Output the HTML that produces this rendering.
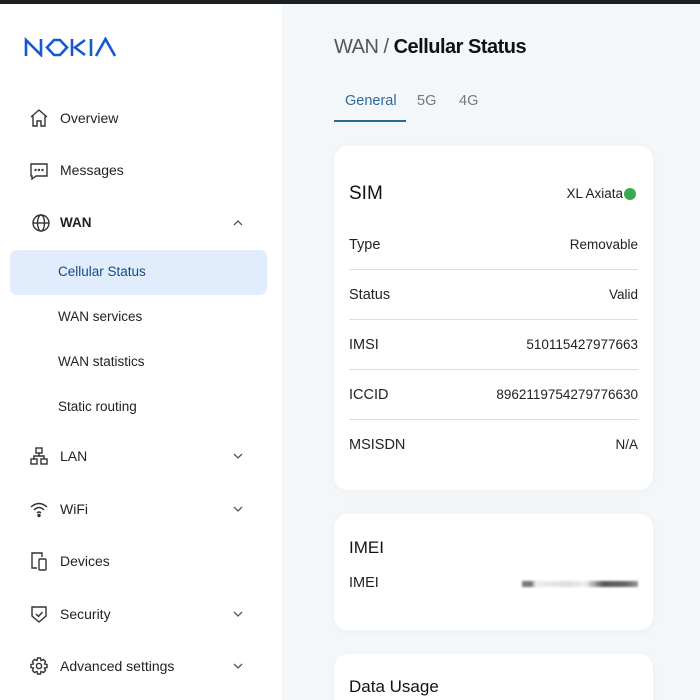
<!DOCTYPE html>
<html><head><style>
*{margin:0;padding:0;box-sizing:border-box}
html,body{width:700px;height:700px;overflow:hidden}
body{background:#f4f7fa;font-family:"Liberation Sans",sans-serif;position:relative;color:#222}
.top{position:absolute;left:0;top:0;width:700px;height:4px;background:#1c1f24}
.side{position:absolute;left:0;top:4px;width:282px;height:696px;background:#fff}
.a{position:absolute}
.nav{position:absolute;left:60px;font-size:14px;color:#222}
.ic{position:absolute;left:29px;width:20px;height:20px}
.chev{position:absolute;left:232px;width:12px;height:8px}
.sub{position:absolute;left:58px;font-size:13.5px;color:#222}
.card{position:absolute;left:334px;width:319px;background:#fff;border-radius:14px;box-shadow:0 2px 10px rgba(0,0,0,0.03)}
.row{position:absolute;left:15px;right:15px;height:50px;border-bottom:1px solid #ddd;font-size:14.5px}
.row span{position:absolute;top:0}
.row .v{right:0;font-size:13.5px}
</style></head><body>
<div class="top"></div>
<div class="side"></div>
<svg class="a" style="left:24px;top:37px" width="93" height="20" viewBox="0 0 93 20" fill="none" stroke="#1657d4" stroke-width="2.6" stroke-linejoin="miter">
<path d="M2 19V3L17 18V2"/>
<path d="M23 10.5L30 3H36L43 10.5L36 18H30Z"/>
<path d="M48 2V19"/><path d="M61 3L51 10.5L61 18"/>
<path d="M67 2V19"/>
<path d="M72 19L81.5 2L91 19"/>
</svg>
<svg class="ic" style="top:108px" viewBox="0 0 20 20" fill="none" stroke="#333" stroke-width="1.4"><path d="M2 9L10 2L18 9"/><path d="M4 8V18H8V13H12V18H16V8"/></svg>
<div class="nav" style="top:110px">Overview</div>
<svg class="ic" style="top:161px" viewBox="0 0 20 20" fill="none" stroke="#333" stroke-width="1.4"><path d="M2 3H18V15H7L3 18V15H2Z"/><circle cx="6.5" cy="9" r=".5"/><circle cx="10" cy="9" r=".5"/><circle cx="13.5" cy="9" r=".5"/></svg>
<div class="nav" style="top:162px">Messages</div>
<svg class="ic" style="top:213px;left:31px" viewBox="0 0 20 20" fill="none" stroke="#333" stroke-width="1.4"><circle cx="10" cy="10" r="8"/><ellipse cx="10" cy="10" rx="3.5" ry="8"/><path d="M2 10H18"/></svg>
<div class="nav" style="top:215px;font-weight:bold;font-size:13.5px">WAN</div>
<svg class="chev" style="top:219px" viewBox="0 0 12 8" fill="none" stroke="#555" stroke-width="1.3"><path d="M2 6L6 2L10 6"/></svg>
<div class="a" style="left:10px;top:250px;width:257px;height:45px;background:#e1edfc;border-radius:7px"></div>
<div class="sub" style="top:264px;color:#124a8a">Cellular Status</div>
<div class="sub" style="top:309px">WAN services</div>
<div class="sub" style="top:354px">WAN statistics</div>
<div class="sub" style="top:399px">Static routing</div>
<svg class="ic" style="top:446px" viewBox="0 0 20 20" fill="none" stroke="#333" stroke-width="1.4"><rect x="7" y="2" width="6" height="5"/><rect x="2" y="13" width="6" height="5"/><rect x="12" y="13" width="6" height="5"/><path d="M10 7V10M5 13V10H15V13"/></svg>
<div class="nav" style="top:448px">LAN</div>
<svg class="chev" style="top:452px" viewBox="0 0 12 8" fill="none" stroke="#555" stroke-width="1.3"><path d="M2 2L6 6L10 2"/></svg>
<svg class="ic" style="top:499px" viewBox="0 0 20 20" fill="none" stroke="#333" stroke-width="1.4"><path d="M2 8Q10 1 18 8"/><path d="M5 11Q10 6 15 11"/><path d="M8 14Q10 12 12 14"/><circle cx="10" cy="16.5" r="1" fill="#333"/></svg>
<div class="nav" style="top:501px">WiFi</div>
<svg class="chev" style="top:505px" viewBox="0 0 12 8" fill="none" stroke="#555" stroke-width="1.3"><path d="M2 2L6 6L10 2"/></svg>
<svg class="ic" style="top:551px" viewBox="0 0 20 20" fill="none" stroke="#333" stroke-width="1.4"><path d="M8 17H3V2H13V6"/><rect x="10" y="8" width="7" height="11" rx="1"/></svg>
<div class="nav" style="top:553px">Devices</div>
<svg class="ic" style="top:604px" viewBox="0 0 20 20" fill="none" stroke="#333" stroke-width="1.4"><path d="M3 3H17V12L10 18L3 12Z"/><path d="M7 10L9.5 12.5L13.5 8"/></svg>
<div class="nav" style="top:606px">Security</div>
<svg class="chev" style="top:610px" viewBox="0 0 12 8" fill="none" stroke="#555" stroke-width="1.3"><path d="M2 2L6 6L10 2"/></svg>
<svg class="ic" style="top:656px" viewBox="0 0 20 20" fill="none" stroke="#333" stroke-width="1.4"><path d="M8.5 2H11.5L12 4.5L14.5 3.5L16.5 5.5L15.5 8L18 8.5V11.5L15.5 12L16.5 14.5L14.5 16.5L12 15.5L11.5 18H8.5L8 15.5L5.5 16.5L3.5 14.5L4.5 12L2 11.5V8.5L4.5 8L3.5 5.5L5.5 3.5L8 4.5Z"/><circle cx="10" cy="10" r="2.6"/></svg>
<div class="nav" style="top:658px">Advanced settings</div>
<svg class="chev" style="top:662px" viewBox="0 0 12 8" fill="none" stroke="#555" stroke-width="1.3"><path d="M2 2L6 6L10 2"/></svg>

<div class="a" style="left:334px;top:36px;font-size:20px;letter-spacing:-0.5px"><span style="color:#555">WAN / </span><span style="color:#111;font-weight:bold">Cellular Status</span></div>
<div class="a" style="left:345px;top:93px;font-size:14.5px;color:#2b6a97">General</div>
<div class="a" style="left:417px;top:93px;font-size:14.5px;color:#777">5G</div>
<div class="a" style="left:459px;top:93px;font-size:14.5px;color:#777">4G</div>
<div class="a" style="left:334px;top:120px;width:72px;height:2px;background:#2b6a97"></div>

<div class="card" style="top:146px;height:344px">
<div class="a" style="left:15px;top:37px;font-size:19px;color:#111">SIM</div>
<div class="a" style="right:30px;top:40px;font-size:13.5px">XL Axiata</div>
<div class="a" style="right:17px;top:42px;width:12px;height:12px;border-radius:50%;background:#3aa94f"></div>
<div class="row" style="top:74px"><span style="top:17px">Type</span><span class="v" style="top:17px">Removable</span></div>
<div class="row" style="top:124px"><span style="top:17px">Status</span><span class="v" style="top:17px">Valid</span></div>
<div class="row" style="top:174px"><span style="top:17px">IMSI</span><span class="v" style="top:17px">510115427977663</span></div>
<div class="row" style="top:224px"><span style="top:17px">ICCID</span><span class="v" style="top:17px">8962119754279776630</span></div>
<div class="row" style="top:274px;border:none"><span style="top:17px">MSISDN</span><span class="v" style="top:17px">N/A</span></div>
</div>
<div class="card" style="top:514px;height:116px">
<div class="a" style="left:15px;top:24px;font-size:17px;color:#111">IMEI</div>
<div class="a" style="left:15px;top:61px;font-size:14.5px">IMEI</div>
<div class="a" style="left:188px;top:67px;width:116px;height:6px;background:linear-gradient(90deg,#777 0,#777 8%,#eee 12%,#ddd 40%,#eee 55%,#555 70%,#666 90%,#999 100%);filter:blur(1px)"></div>
</div>
<div class="card" style="top:654px;height:60px">
<div class="a" style="left:15px;top:23px;font-size:17px;color:#111">Data Usage</div>
</div>
</body></html>
